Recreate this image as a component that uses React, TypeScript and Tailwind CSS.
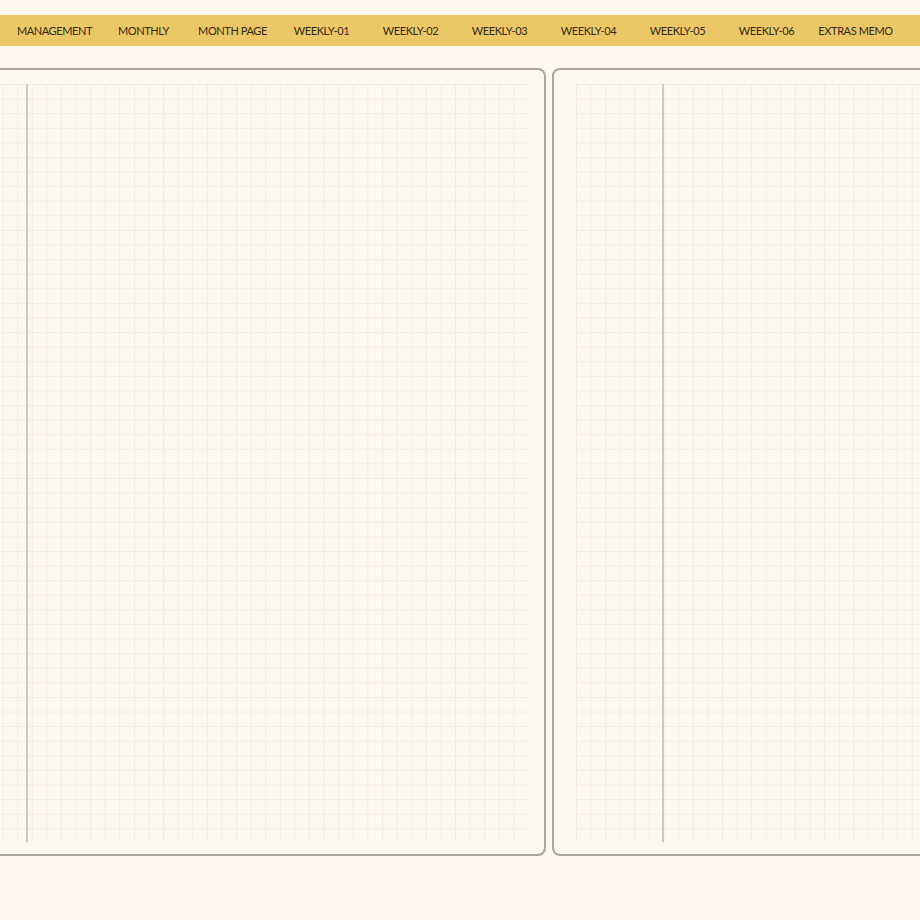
import React from "react";

const tabs = [
  "MANAGEMENT",
  "MONTHLY",
  "MONTH PAGE",
  "WEEKLY-01",
  "WEEKLY-02",
  "WEEKLY-03",
  "WEEKLY-04",
  "WEEKLY-05",
  "WEEKLY-06",
  "EXTRAS MEMO",
];

const grid =
  "bg-[linear-gradient(to_right,#f2ecdd_1px,transparent_1px),linear-gradient(to_bottom,#f2ecdd_1px,transparent_1px)] bg-[size:14.6px_14.6px]";

export default function App() {
  return (
    <div className="w-[920px] h-[920px] overflow-hidden bg-[#fef7ec] font-['Lato','Open_Sans',sans-serif]">
      <div className="h-[15px]" />
      <div className="h-[31px] bg-[#ecc766] flex items-center pl-[10px]">
        {tabs.map((t) => (
          <div
            key={t}
            className="w-[89px] shrink-0 text-center text-[11px] leading-none text-[#33291a] tracking-[-0.4px]"
          >
            {t}
          </div>
        ))}
      </div>
      <div className="h-[22px]" />
      <div className="flex gap-[6px] ml-[-14px]">
        {/* Left page */}
        <div className="w-[560px] h-[788px] shrink-0 rounded-[8px] border-2 border-[#aaa798] bg-[#fdf8ef] pt-[14px] pb-[12px] pr-[16px] flex">
          <div className={`relative flex-1 h-full ${grid}`}>
            <div className="absolute left-[38px] top-0 bottom-0 w-[2px] bg-[#cdc9bc]" />
          </div>
        </div>
        {/* Right page */}
        <div className="w-[400px] h-[788px] shrink-0 rounded-[8px] border-2 border-[#aaa798] bg-[#fdf8ef] pt-[14px] pb-[12px] pl-[22px] flex">
          <div className={`relative flex-1 h-full ${grid}`}>
            <div className="absolute left-[86px] top-0 bottom-0 w-[2px] bg-[#cdc9bc]" />
          </div>
        </div>
      </div>
    </div>
  );
}
